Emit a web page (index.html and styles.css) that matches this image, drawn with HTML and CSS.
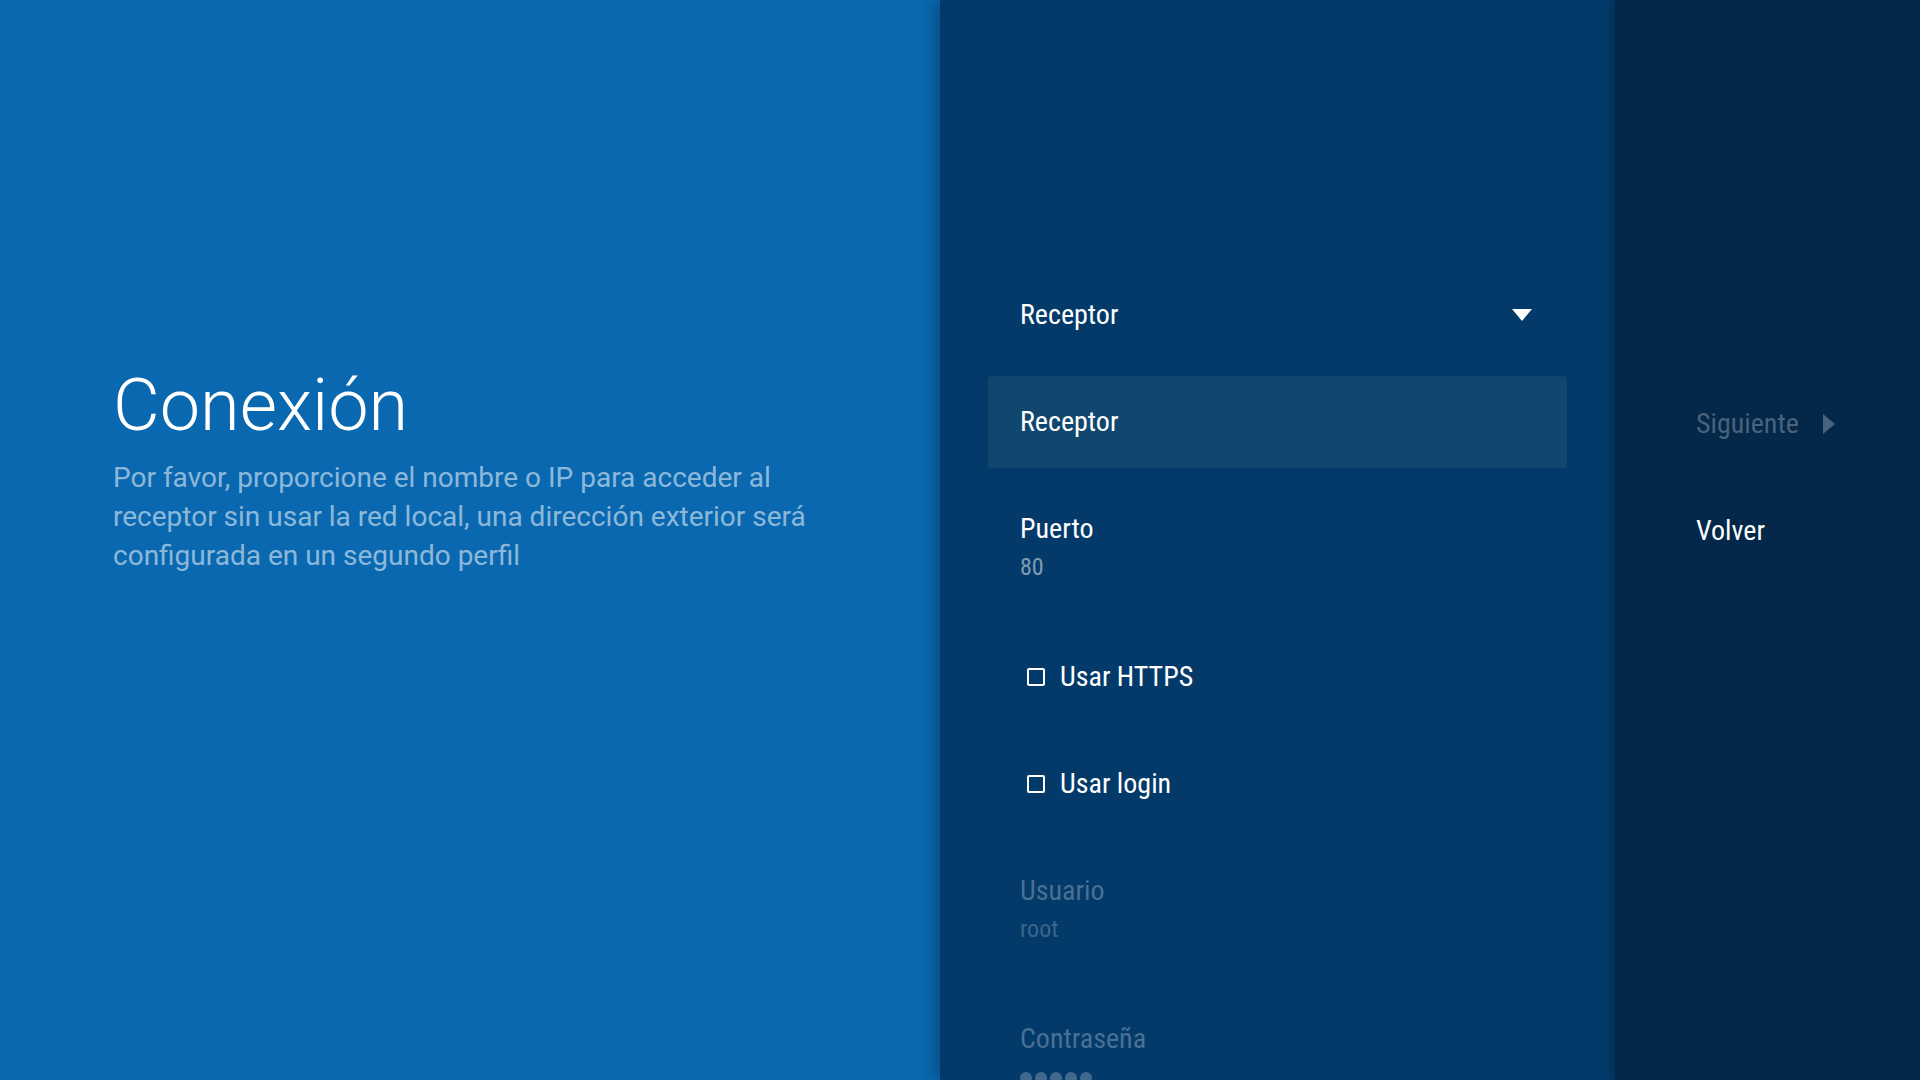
FILE: index.html
```html
<!DOCTYPE html>
<html lang="es">
<head>
    <meta charset="UTF-8">
    <meta name="viewport" content="width=device-width, initial-scale=1.0">
    <title>Conexión</title>
    <link rel="stylesheet" href="styles.css">
</head>
<body>
    <div class="guided-step">
        <!-- Guidance -->
        <div class="guidance">
            <h1 class="guidance-title">Conexión</h1>
            <p class="guidance-desc">Por favor, proporcione el nombre o IP para acceder al receptor sin usar la red local, una dirección exterior será configurada en un segundo perfil</p>
        </div>

        <!-- Actions -->
        <div class="actions">
            <div class="action">
                <span class="action-title">Receptor</span>
                <svg class="caret-down" width="20" height="12" viewBox="0 0 20 12"><path d="M0 0 L20 0 L10 12 Z" fill="#fff"/></svg>
            </div>
            <div class="action selected">
                <span class="action-title">Receptor</span>
            </div>
            <div class="action stacked">
                <span class="action-title">Puerto</span>
                <span class="action-desc">80</span>
            </div>
            <div class="action">
                <span class="checkbox"></span>
                <span class="action-title">Usar HTTPS</span>
            </div>
            <div class="action">
                <span class="checkbox"></span>
                <span class="action-title">Usar login</span>
            </div>
            <div class="action stacked disabled">
                <span class="action-title">Usuario</span>
                <span class="action-desc">root</span>
            </div>
            <div class="action stacked disabled">
                <span class="action-title">Contraseña</span>
                <span class="action-desc dots">
                    <i></i><i></i><i></i><i></i><i></i>
                </span>
            </div>
        </div>

        <!-- Buttons -->
        <div class="buttons">
            <div class="action disabled">
                <span class="action-title">Siguiente</span>
                <svg class="caret-right" width="12" height="20" viewBox="0 0 12 20"><path d="M0 0 L12 10 L0 20 Z" fill="currentColor"/></svg>
            </div>
            <div class="action">
                <span class="action-title">Volver</span>
            </div>
        </div>
    </div>
</body>
</html>
```

FILE: styles.css
```css
body {
    margin: 0;
    height: 100vh;
    overflow: hidden;
    font-family: Roboto, "Noto Sans", sans-serif;
    color: #fff;
}
.guided-step {
    display: flex;
    height: 100%;
}
.guidance {
    width: 940px;
    background-color: #0968b0;
    padding: 363px 107px 0 113px;
    box-sizing: border-box;
}
.guidance-title {
    margin: 0;
    font-size: 72px;
    font-weight: 300;
    line-height: 86px;
}
.guidance-desc {
    margin: 9px 0 0;
    font-family: Roboto, sans-serif;
    font-size: 28px;
    line-height: 39px;
    color: rgba(255, 255, 255, 0.55);
}
.actions {
    width: 675px;
    background-color: #043a6a;
    padding: 269px 48px 0;
    box-sizing: border-box;
    display: flex;
    flex-direction: column;
    gap: 15px;
    box-shadow: -6px 0 14px rgba(0, 0, 0, 0.25);
    position: relative;
}
.buttons {
    flex: 1;
    background-color: #03284a;
    padding: 378px 0 0 49px;
    display: flex;
    flex-direction: column;
    gap: 15px;
    box-shadow: -3px 0 8px rgba(0, 0, 0, 0.25);
    position: relative;
}
.action {
    display: flex;
    align-items: center;
    padding: 27px 35px 28px 32px;
    border-radius: 4px;
    font-family: "Roboto Condensed", "Liberation Sans Narrow", Roboto, sans-serif;
    font-size: 28px;
    line-height: 37px;
}
.action.selected {
    background-color: #11476f;
}
.action.stacked {
    flex-direction: column;
    align-items: flex-start;
}
.action-desc {
    line-height: 41px;
    color: rgba(255, 255, 255, 0.5);
    font-size: 24px;
}
.action.disabled .action-title {
    color: rgba(255, 255, 255, 0.28);
}
.action.disabled .action-desc {
    color: rgba(255, 255, 255, 0.24);
}
.dots {
    display: flex;
    align-items: center;
    gap: 3px;
    height: 41px;
}
.dots i {
    width: 12px;
    height: 12px;
    border-radius: 50%;
    background-color: currentColor;
}
.caret-down {
    margin-left: auto;
}
.buttons .action.disabled {
    color: rgba(255, 255, 255, 0.28);
}
.caret-right {
    margin-left: 24px;
}
.checkbox {
    width: 14px;
    height: 14px;
    border: 2px solid #fff;
    border-radius: 2px;
    margin: 0 15px 0 7px;
}
```
